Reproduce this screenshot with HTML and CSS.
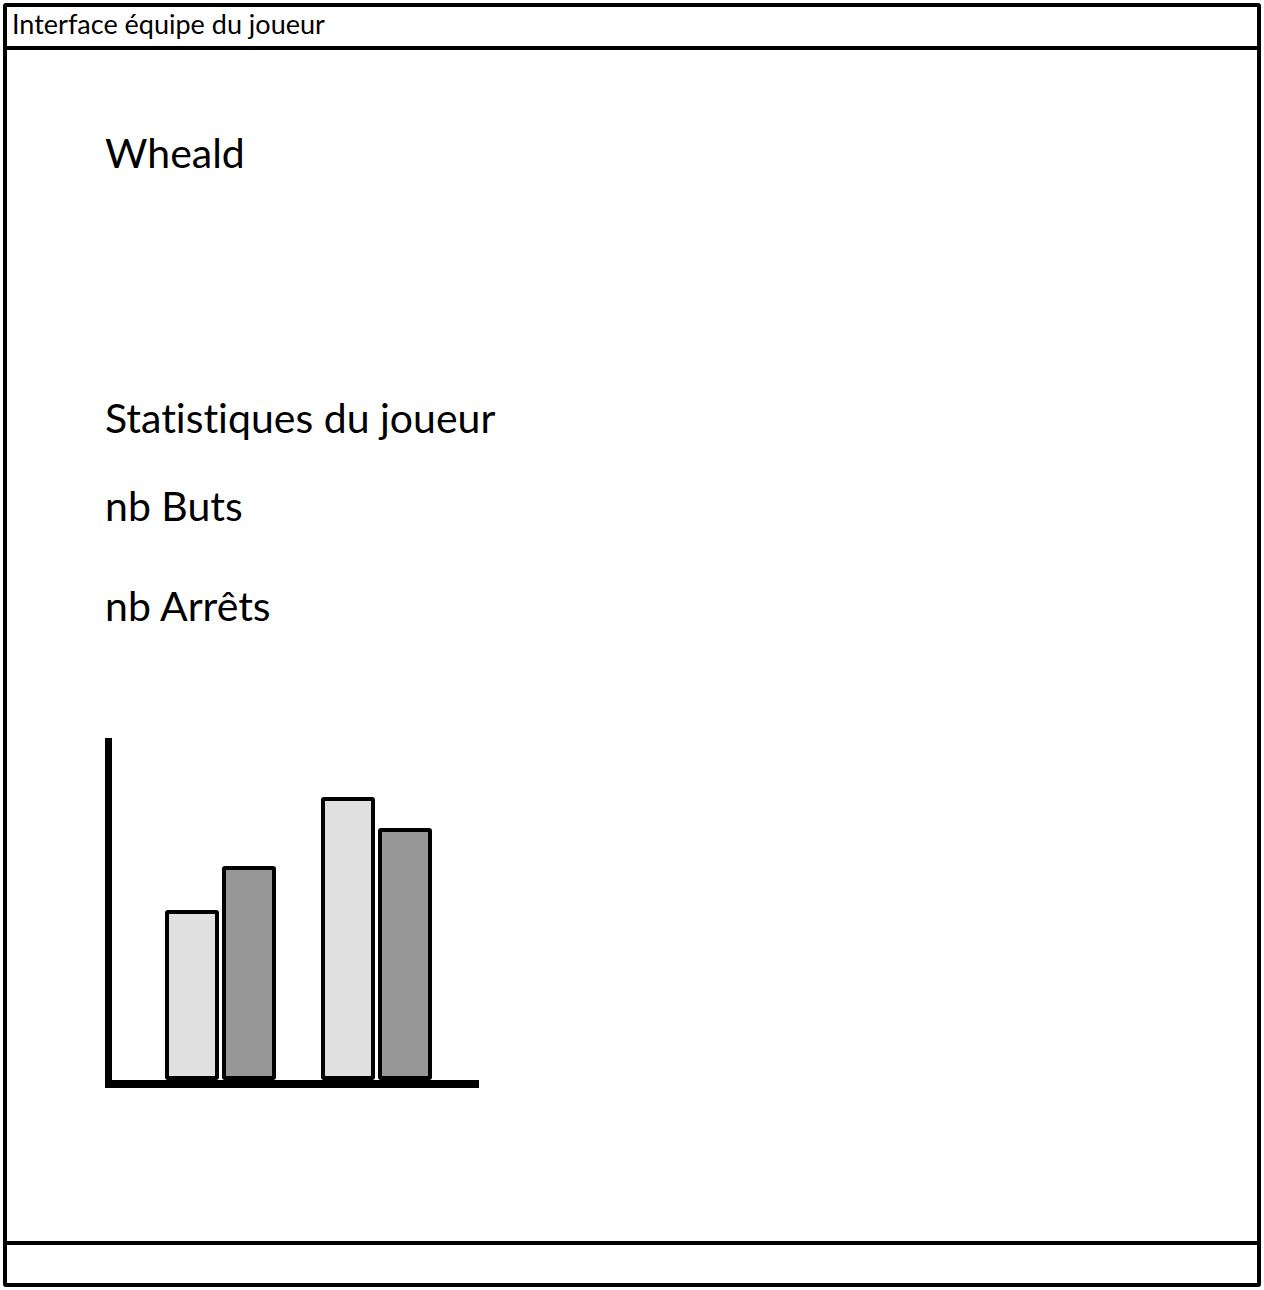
FILE: index.html
```html
<!DOCTYPE html>
<html lang="fr">
<head>
    <meta charset="UTF-8">
    <meta name="viewport" content="width=device-width, initial-scale=1.0">
    <title>Interface équipe du joueur</title>
    <link rel="stylesheet" href="styles.css">
</head>
<body>

<div class="window">
    <div class="titlebar">Interface équipe du joueur</div>

    <div class="content">
        <h1 class="team-name">Wheald</h1>

        <h2 class="stats-title">Statistiques du joueur</h2>
        <p class="stat stat-buts">nb Buts</p>
        <p class="stat stat-arrets">nb Arrêts</p>

        <div class="chart">
            <div class="bar-group">
                <div class="bar light" style="height: 170px"></div>
                <div class="bar dark" style="height: 214px"></div>
            </div>
            <div class="bar-group">
                <div class="bar light" style="height: 283px"></div>
                <div class="bar dark" style="height: 252px"></div>
            </div>
        </div>
    </div>

    <div class="statusbar"></div>
</div>

</body>
</html>
```

FILE: styles.css
```css
body {
    margin: 0;
    font-family: 'Lato', 'Open Sans', sans-serif;
    font-variant-ligatures: none;
    color: #000;
    background: #fff;
}

.window {
    box-sizing: border-box;
    margin: 3px;
    height: 1284px;
    border: 4px solid #000;
    border-radius: 3px;
    display: flex;
    flex-direction: column;
}

.titlebar {
    height: 39px;
    line-height: 34px;
    padding-left: 5px;
    font-size: 27px;
    border-bottom: 4px solid #000;
}

.content {
    flex: 1;
    padding-left: 98px;
}

.team-name,
.stats-title,
.stat {
    margin: 0;
    font-size: 41px;
    font-weight: normal;
    line-height: 48px;
}

.team-name {
    margin-top: 79px;
}

.stats-title {
    margin-top: 217px;
}

.stat-buts {
    margin-top: 40px;
}

.stat-arrets {
    margin-top: 52px;
}

.chart {
    box-sizing: border-box;
    margin-top: 108px;
    width: 374px;
    height: 350px;
    border-left: 7px solid #000;
    border-bottom: 8px solid #000;
    display: flex;
    align-items: flex-end;
    gap: 45px;
    padding-left: 53px;
}

.bar-group {
    display: flex;
    align-items: flex-end;
    gap: 3px;
}

.bar {
    box-sizing: border-box;
    width: 54px;
    border: 4px solid #000;
    border-radius: 3px;
}

.bar.light {
    background: #e0e0e0;
}

.bar.dark {
    background: #979797;
}

.statusbar {
    height: 38px;
    border-top: 4px solid #000;
}
```
